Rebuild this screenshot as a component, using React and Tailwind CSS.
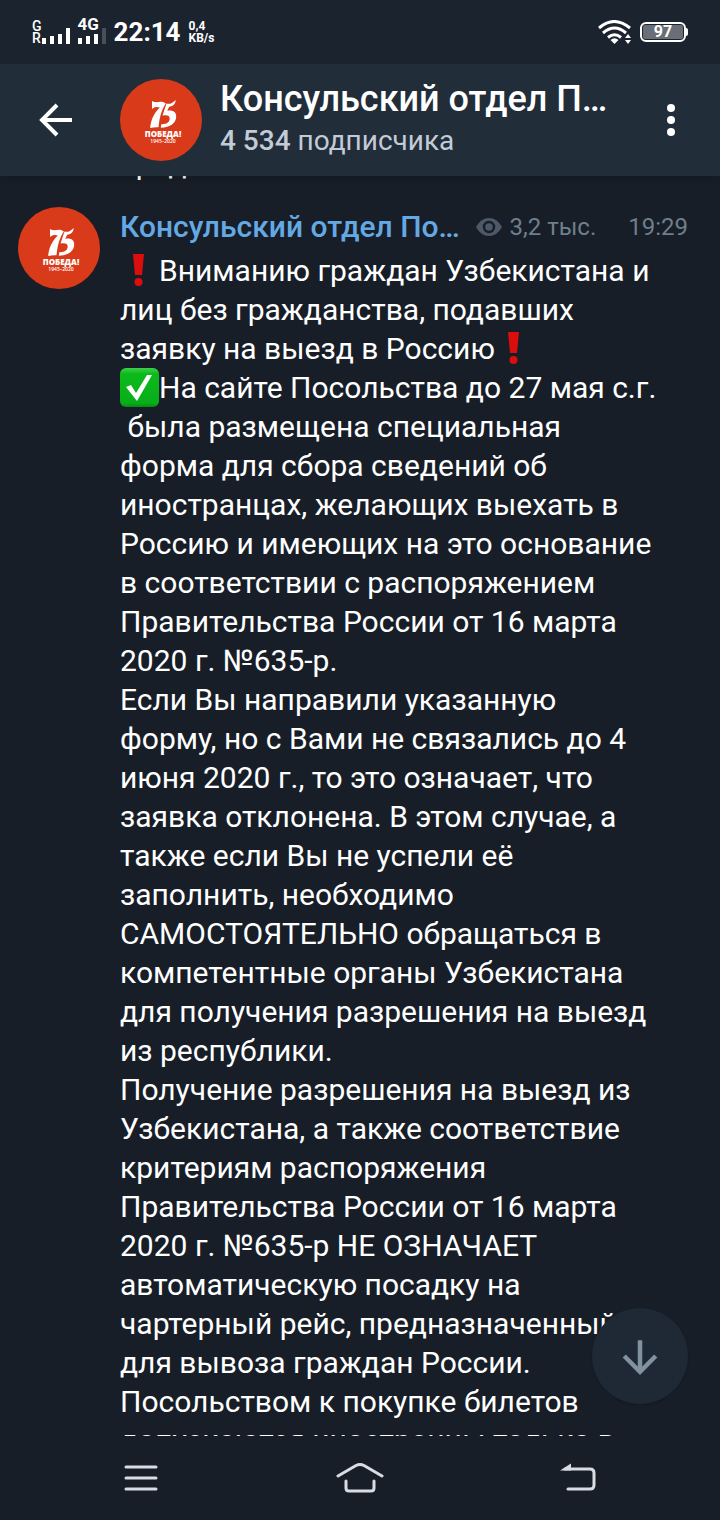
import { ArrowDown } from 'lucide-react'

const CHANNEL = 'Консульский отдел Посольства России в Узбекистане'

function Logo() {
  return (
    <svg viewBox="0 0 82 82" className="size-[82px] shrink-0" aria-hidden="true">
      <circle cx="41" cy="41" r="41" fill="#d93a1a" />
      <g fill="#fff">
        <path d="M32 22c3 2 6 .8 9 .8 1.800 0 3.500 .6 4.800 1.600C41.500 31 39.500 38 38.500 48.300c-2.600-.4-5.400 0-8.300 .8 .6-8.400 3.600-14.500 9.600-20.600-2.600-1-5.600-.6-7.800 1.500z" />
        <path d="M46.500 24.500c3.600 1 6.200-.6 9.300-3.600-.6 4.200-2.400 6.300-6.600 6.800l-2 4c5.400-1 9 1 9 5.700 0 6.400-5.800 11.100-15.400 11.300l.5-3.500c5.600 .3 8.400-2.300 8.400-5.700 0-2.800-2.400-4-7.200-3z" />
        <text x="43" y="58" textAnchor="middle" fontFamily="Open Sans, sans-serif" fontWeight="800" fontSize="8">ПОБЕДА!</text>
        <text x="43" y="64" textAnchor="middle" fontFamily="Open Sans, sans-serif" fontWeight="600" fontSize="5">1945–2020</text>
      </g>
    </svg>
  )
}

function Exclamation() {
  return (
    <svg viewBox="0 0 39 39" className="inline-block size-[39px] align-top" role="img" aria-label="Внимание">
      <path d="M13 3h11l-2 21h-7z" fill="#dc0d0d" />
      <circle cx="18.500" cy="31" r="4" fill="#dc0d0d" />
    </svg>
  )
}

function CheckMark() {
  return (
    <svg viewBox="0 0 39 39" className="inline-block size-[39px] align-top" role="img" aria-label="Галочка">
      <defs>
        <linearGradient id="check" x1="0" y1="0" x2="0" y2="1">
          <stop offset="0" stopColor="#3fd04b" />
          <stop offset=".15" stopColor="#0cba1c" />
          <stop offset=".9" stopColor="#08ae18" />
          <stop offset="1" stopColor="#078a14" />
        </linearGradient>
      </defs>
      <rect x="0" y="0" width="39" height="39" rx="6" fill="url(#check)" />
      <path d="M6 19l5-2 5 8L27 7h5L17 33z" fill="#fff" />
    </svg>
  )
}

function SignalBars({ faded }) {
  return (
    <svg viewBox="0 0 28 16" className="h-4 w-7" aria-hidden="true">
      <g fill="#fff">
        <rect x="0" y="10" width="4" height="6" />
        <rect x="8" y="8" width="4" height="8" />
        <rect x="16" y="6" width="4" height="10" />
        <rect x="24" y="0" width="4" height="16" opacity={faded ? 0.2 : 1} />
      </g>
    </svg>
  )
}

function StatusBar() {
  return (
    <div className="flex h-16 shrink-0 items-center bg-[#1b232e] px-8 text-white">
      <div className="flex items-end">
        <div className="text-[14px] leading-3 font-medium">
          <div>G</div>
          <div>R</div>
        </div>
        <SignalBars />
      </div>
      <div className="relative ml-2 flex h-6 items-end">
        <SignalBars faded />
        <span className="absolute -top-1 left-0 text-[17px] leading-4 font-bold">4G</span>
      </div>
      <span className="ml-2 text-[26px] leading-8 font-bold">22:14</span>
      <div className="ml-2 text-[12px] leading-3 font-bold">
        <div>0,4</div>
        <div>KB/s</div>
      </div>
      <svg viewBox="0 0 34 24" className="ml-auto h-6 w-[34px]" aria-hidden="true">
        <g fill="none" stroke="#fff" strokeWidth="3">
          <path d="M1 8Q16-5 32 8" />
          <path d="M5 13Q16.500 3 28 13" />
          <path d="M10 17.500Q16.500 12 23 17.500" />
        </g>
        <path d="M12.500 20q4-3.400 8 0l-4 4z" fill="#fff" />
        <path d="M27 18l3-4 3 4zM27 20h6l-3 4z" fill="#fff" />
      </svg>
      <div className="ml-2 flex items-center">
        <div className="flex h-5 w-[46px] items-center rounded-md border-2 border-white p-px">
          <span className="flex h-full w-full items-center justify-center rounded-xs bg-[#6a6f77] text-[16px] leading-4 font-bold">97</span>
        </div>
        <span className="h-2 w-[2px] rounded-r-sm bg-white" />
      </div>
    </div>
  )
}

function Header() {
  return (
    <header className="z-10 flex h-28 shrink-0 items-center bg-[#222d3a] text-white shadow-md">
      <button aria-label="Назад" className="flex h-full w-[120px] items-center pl-8">
        <svg viewBox="0 0 48 48" className="size-12" fill="none" stroke="#fff" strokeWidth="4">
          <path d="M40 24H10M25 9L10 24l15 15" />
        </svg>
      </button>
      <Logo />
      <div className="ml-[18px] min-w-0 flex-1">
        <h1 className="truncate text-[36px] leading-[42px] font-medium">{CHANNEL}</h1>
        <p className="text-[28px] leading-[42px] text-[#c3ccd6]">
          <span className="font-medium">4 534</span> подписчика
        </p>
      </div>
      <button aria-label="Меню" className="flex h-full w-[98px] items-center justify-center">
        <svg viewBox="0 0 8 32" className="h-8 w-2" fill="#fff">
          <circle cx="4" cy="4" r="4" />
          <circle cx="4" cy="16" r="4" />
          <circle cx="4" cy="28" r="4" />
        </svg>
      </button>
    </header>
  )
}

function Message() {
  return (
    <article className="flex gap-5 pt-6 pl-[18px]">
      <Logo />
      <div className="min-w-0 flex-1">
        <div className="flex h-11 items-start pr-8 text-[24px] leading-10 text-[#6f7f8d]">
          <h2 className="min-w-0 flex-1 truncate text-[30px] font-medium text-[#64a9e4]">{CHANNEL}</h2>
          <svg viewBox="0 0 26 20" className="mt-[10px] ml-3 h-5 w-[26px] shrink-0" aria-label="Просмотры">
            <path d="M0 10Q5 1 13 1t13 9q-5 9-13 9T0 10z" fill="#4d5967" />
            <circle cx="13" cy="10" r="5" fill="none" stroke="#171e27" strokeWidth="2.500" />
          </svg>
          <span className="ml-2 shrink-0">3,2 тыс.</span>
          <time className="ml-8 shrink-0">19:29</time>
        </div>
        <div className="pr-14 text-[30px] leading-[39px] text-white">
          <p><Exclamation />Вниманию граждан Узбекистана и лиц без гражданства, подавших заявку на выезд в Россию<Exclamation /></p>
          <p>
            <CheckMark />На сайте Посольства до 27 мая с.г.<br />
            &nbsp;была размещена специальная<br />
            форма для сбора сведений об иностранцах, желающих выехать в Россию и имеющих на это
            основание в соответствии с распоряжением Правительства России от 16 марта 2020 г. №635-р.
          </p>
          <p>
            Если Вы направили указанную<br />
            форму, но с Вами не связались до 4 июня 2020 г., то это
            означает, что заявка отклонена. В этом случае, а также если Вы не успели её<br />
            заполнить, необходимо<br />
            САМОСТОЯТЕЛЬНО обращаться в компетентные органы Узбекистана для получения
            разрешения на выезд из республики.
          </p>
          <p>
            Получение разрешения на выезд из Узбекистана, а также соответствие критериям распоряжения
            Правительства России от 16 марта 2020 г. №635-р НЕ ОЗНАЧАЕТ автоматическую посадку на
            чартерный рейс, предназначенный для вывоза граждан России.
          </p>
          <p>Посольством к покупке билетов допускаются иностранцы только в</p>
        </div>
      </div>
    </article>
  )
}

function NavBar() {
  return (
    <nav className="flex h-[84px] shrink-0 items-center justify-around bg-[#171e27] px-8">
      <button aria-label="Недавние">
        <svg viewBox="0 0 48 32" className="h-8 w-12" fill="none" stroke="#d8dde4" strokeWidth="3" strokeLinecap="round">
          <path d="M9 5h30M9 16h30M9 27h30" />
        </svg>
      </button>
      <button aria-label="Домой">
        <svg viewBox="0 0 48 32" className="h-8 w-12" fill="none" stroke="#d8dde4" strokeWidth="3" strokeLinecap="round" strokeLinejoin="round">
          <path d="M2 14L20 3.500q4-2 8 0L46 14M10 19v7q0 3 3 3h22q3 0 3-3v-7" />
        </svg>
      </button>
      <button aria-label="Вернуться">
        <svg viewBox="0 0 48 32" className="h-8 w-12" fill="none" stroke="#d8dde4" strokeWidth="3" strokeLinecap="round">
          <path d="M10 7h25q4 0 4 4v12q0 4-4 4H13" />
          <path d="M5 8.500l11-7v7z" fill="#d8dde4" stroke="none" />
        </svg>
      </button>
    </nav>
  )
}

export default function App() {
  return (
    <div className="flex h-screen flex-col overflow-hidden bg-[#171e27] font-[Roboto,sans-serif]">
      <StatusBar />
      <Header />
      <main className="relative min-h-0 flex-1 overflow-hidden">
        {/* tail of the previous message, mostly scrolled under the header */}
        <p className="-mt-8 pl-[120px] text-[30px] leading-[39px] text-white">среди</p>
        <Message />
        <button
          aria-label="Вниз"
          className="absolute right-8 bottom-8 flex size-24 items-center justify-center rounded-full bg-[#1f2935] text-[#8291a0] shadow-sm"
        >
          <ArrowDown size={54} strokeWidth={2} strokeLinecap="butt" strokeLinejoin="miter" />
        </button>
      </main>
      <NavBar />
    </div>
  )
}
